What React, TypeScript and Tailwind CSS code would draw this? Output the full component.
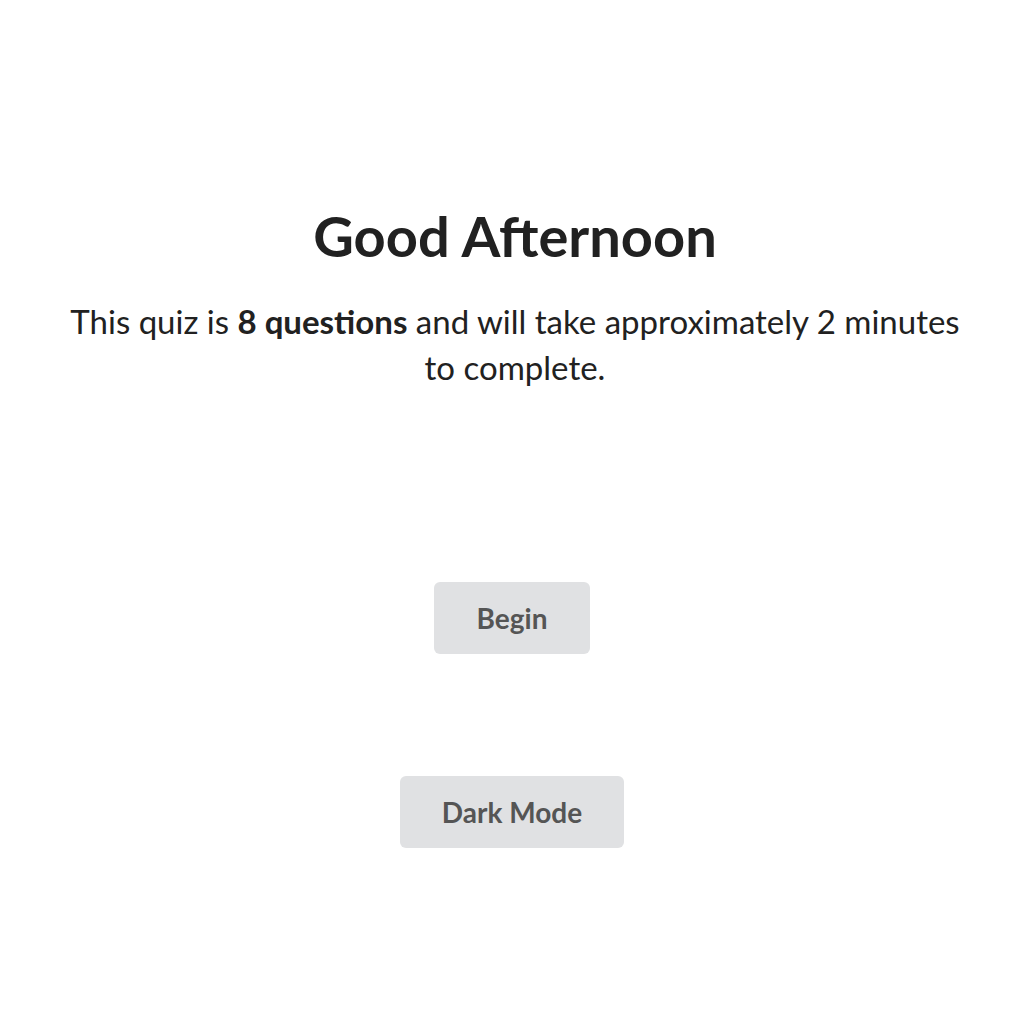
export default function App() {
  return (
    <div className="min-h-screen w-full bg-white flex flex-col items-center font-['Lato',sans-serif] text-[#212121]">
      <h1 className="mt-[202px] text-[56px] leading-[68px] font-bold">Good Afternoon</h1>
      <p className="mt-[28px] w-[920px] text-center text-[33px] leading-[46px]">
        This quiz is <span className="font-bold">8 questions</span> and will take approximately 2 minutes
        to complete.
      </p>
      <button className="mt-[192px] mr-[6px] h-[72px] px-[43px] rounded-[6px] bg-[#e0e1e3] text-[#555] text-[28px] font-bold">
        Begin
      </button>
      <button className="mt-[122px] mr-[6px] h-[72px] px-[42px] rounded-[6px] bg-[#e0e1e3] text-[#555] text-[28px] font-bold">
        Dark Mode
      </button>
    </div>
  );
}
